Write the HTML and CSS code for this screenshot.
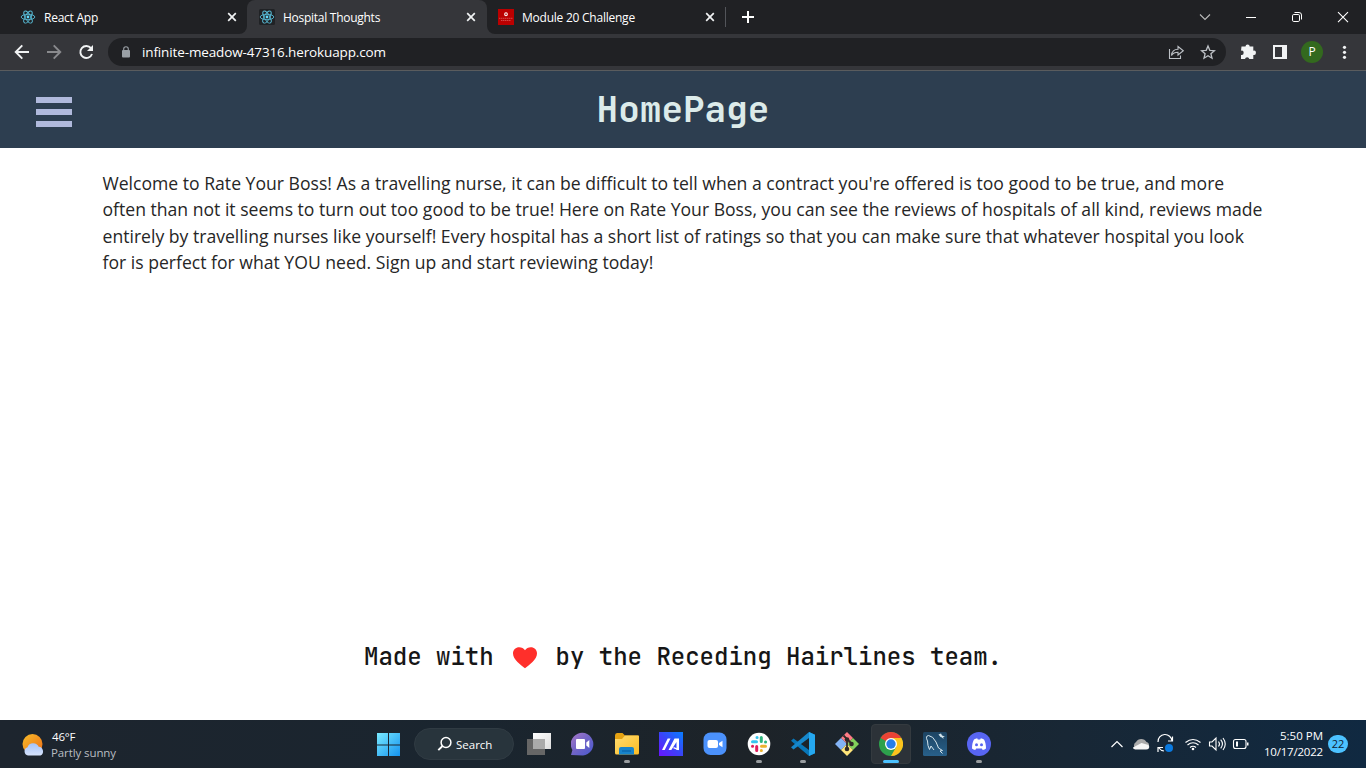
FILE: index.html
```html
<!DOCTYPE html>
<html lang="en">
<head>
<meta charset="utf-8">
<title>Hospital Thoughts</title>
<link rel="stylesheet" href="styles.css">
</head>
<body>
<svg class="defs" width="0" height="0">
  <defs>
    <symbol id="react" viewBox="0 0 16 16">
      <g fill="none" stroke="#58bcd7" stroke-width="0.9">
        <ellipse cx="8" cy="8" rx="6.8" ry="2.7"/>
        <ellipse cx="8" cy="8" rx="6.8" ry="2.7" transform="rotate(60 8 8)"/>
        <ellipse cx="8" cy="8" rx="6.8" ry="2.7" transform="rotate(120 8 8)"/>
      </g>
      <circle cx="8" cy="8" r="1.4" fill="#61dafb"/>
    </symbol>
    <symbol id="x" viewBox="0 0 10 10"><path d="M1.2 1.2l7.6 7.6M8.8 1.2L1.2 8.8" stroke="#f1f3f4" stroke-width="1.7"/></symbol>
    <linearGradient id="win" x1="0" y1="0" x2="1" y2="1"><stop offset="0" stop-color="#79eaff"/><stop offset="1" stop-color="#1492ee"/></linearGradient>
    <linearGradient id="sun" x1="0" y1="0" x2="1" y2="1"><stop offset="0" stop-color="#f8bd29"/><stop offset="1" stop-color="#ed6d18"/></linearGradient>
    <linearGradient id="cloud" x1="0" y1="0" x2="0" y2="1"><stop offset="0" stop-color="#a5c4fa"/><stop offset="1" stop-color="#d5e2fb"/></linearGradient>
    <linearGradient id="chat" x1="0" y1="0" x2="1" y2="1"><stop offset="0" stop-color="#a877c8"/><stop offset=".5" stop-color="#7064c6"/><stop offset="1" stop-color="#4859d0"/></linearGradient>
    <linearGradient id="asus" x1="0" y1="1" x2="1" y2="0"><stop offset="0" stop-color="#6a14ff"/><stop offset=".5" stop-color="#3a44f7"/><stop offset="1" stop-color="#087eff"/></linearGradient>
    <linearGradient id="fold" x1="0" y1="0" x2="1" y2="1"><stop offset="0" stop-color="#ffdc70"/><stop offset="1" stop-color="#fcbc23"/></linearGradient>
    <linearGradient id="sql" x1="0" y1="0" x2="0" y2="1"><stop offset="0" stop-color="#1d4463"/><stop offset="1" stop-color="#28608a"/></linearGradient>
    <linearGradient id="tv" x1="0" y1="0" x2="1" y2="1"><stop offset="0" stop-color="#fff"/><stop offset="1" stop-color="#ddd"/></linearGradient>
  </defs>
</svg>

<div class="tabs">
  <div class="tab">
    <svg width="16" height="16"><use href="#react"/></svg>
    <span class="tab-title t1">React App</span>
    <svg width="10" height="10"><use href="#x"/></svg>
  </div>
  <div class="tab active">
    <svg width="16" height="16"><rect width="16" height="16" rx="1.5" fill="#202225"/><use href="#react"/></svg>
    <span class="tab-title t2">Hospital Thoughts</span>
    <svg width="10" height="10"><use href="#x"/></svg>
  </div>
  <div class="tab last">
    <svg width="16" height="16" viewBox="0 0 16 16"><path fill="#b00" d="M0 0h16v16H0z"/><ellipse cx="8" cy="5.3" rx="1.3" ry="1.5" fill="none" stroke="#fff" stroke-width="1.1"/><path d="M1 9.300h14M3 11.500h10" stroke="#d66" stroke-width=".7" stroke-dasharray="1.500 .5"/></svg>
    <span class="tab-title t3">Module 20 Challenge</span>
    <svg width="10" height="10"><use href="#x"/></svg>
  </div>
  <svg class="plus" width="12" height="12" viewBox="0 0 12 12"><path d="M6 0v12M0 6h12" stroke="#fff" stroke-width="2"/></svg>
  <div class="window-controls">
    <svg width="46" height="28" viewBox="0 0 46 28"><path d="M18 11.500l5 5 5-5" fill="none" stroke="#bbb" stroke-width="1.100"/></svg>
    <svg width="46" height="28" viewBox="0 0 46 28"><path d="M18 14.500h10" stroke="#fff"/></svg>
    <svg width="46" height="28" viewBox="0 0 46 28"><g fill="none" stroke="#fff"><rect x="18.500" y="11.500" width="7" height="7" rx="1.300"/><path d="M20.500 9.500h4.500q2.500 0 2.500 2.500v4.500"/></g></svg>
    <svg width="46" height="28" viewBox="0 0 46 28"><path d="M18 9.200l10 10M28 9.200l-10 10" stroke="#fff" stroke-width="1.100"/></svg>
  </div>
</div>

<div class="toolbar">
  <svg class="nav" width="108" height="36" viewBox="0 0 108 36">
    <g fill="none" stroke-width="1.900">
      <path d="M29 18H16M22.300 11.400L15.700 18l6.600 6.600" stroke="#f1f3f4"/>
      <path d="M47 18h13M53.700 11.400l6.600 6.600-6.600 6.600" stroke="#898a8d"/>
      <path d="M91 14.200A6 6 0 1 0 92 20" stroke="#f1f3f4"/>
    </g>
    <path d="M93 11v6h-6z" fill="#f1f3f4"/>
  </svg>
  <div class="address">
    <svg width="8" height="12" viewBox="0 0 8 12"><rect y="4" width="8" height="7.500" rx="1" fill="#9aa0a6"/><path d="M1.700 5V3a2.300 2.300 0 0 1 4.600 0V5" fill="none" stroke="#9aa0a6" stroke-width="1.100"/></svg>
    <span class="url">infinite-meadow-47316.herokuapp.com</span>
    <svg class="share" width="56" height="28" viewBox="0 0 56 28" fill="none" stroke="#bdc1c6"><path d="M7.500 11v9.500h11V17.500" stroke-width="1.100"/><path d="M9.500 17.500c.4-4.200 3-6.200 6.500-6.200V8.500l5.300 4.200-5.300 4.300v-2.700c-3 0-5 .7-6.500 3.200z" stroke-width="1.100"/><path d="M46 8l1.800 4.300 4.600.4-3.500 3 1.100 4.500-4-2.400-4 2.400 1.100-4.500-3.500-3 4.600-.4z" stroke-width="1.300"/></svg>
  </div>
  <svg width="140" height="36" viewBox="0 0 140 36">
    <path d="M15.500 12.500h4a2.100 2.100 0 1 1 4.200 0h3.600v4.200a2.200 2.200 0 1 1 0 4.300v4h-4a2.200 2.200 0 0 0-4.300 0h-4v-4a2.200 2.200 0 1 0 0-4.300z" fill="#f1f3f4"/>
    <path d="M48 12h12v12H48z" fill="none" stroke="#f1f3f4" stroke-width="2"/><path d="M56 12h4v12h-4z" fill="#f1f3f4"/>
    <circle cx="86" cy="18" r="11" fill="#33691e"/><text x="86" y="22.300" text-anchor="middle" class="avatar">P</text>
    <g fill="#f1f3f4"><circle cx="118.500" cy="13.300" r="1.600"/><circle cx="118.500" cy="18.300" r="1.600"/><circle cx="118.500" cy="23.300" r="1.600"/></g>
  </svg>
</div>

<header class="header">
  <div class="burger"><i></i><i></i><i></i></div>
  <h1 class="title">HomePage</h1>
</header>

<main class="main">
  <p class="intro">Welcome to Rate Your Boss! As a travelling nurse, it can be difficult to tell when a contract you're offered is too good to be true, and more<br>often than not it seems to turn out too good to be true! Here on Rate Your Boss, you can see the reviews of hospitals of all kind, reviews made<br>entirely by travelling nurses like yourself! Every hospital has a short list of ratings so that you can make sure that whatever hospital you look<br>for is perfect for what YOU need. Sign up and start reviewing today!</p>
  <footer class="footer"><span>Made with</span><svg width="24" height="22" viewBox="0 0 24 22"><path d="M12 21.300C8 18 0 12.500 0 6.500 0 2.800 2.800.3 6.200.3 8.700.3 10.700 1.400 12 3.200 13.300 1.400 15.300.3 17.800.3 21.200.3 24 2.800 24 6.500c0 6-8 11.500-12 14.800z" fill="#ff2f2b"/></svg><span>by the Receding Hairlines team.</span></footer>
</main>

<div class="taskbar">
  <div class="weather">
    <svg width="24" height="24" viewBox="0 0 24 24"><circle cx="10.500" cy="11" r="10" fill="url(#sun)"/><path d="M6 22.500a4.300 4.300 0 0 1-.5-8.300 6 6 0 0 1 11.200-.4A4.600 4.600 0 0 1 18.500 22.500z" fill="url(#cloud)"/></svg>
    <div class="weather-text"><div class="temp">46°F</div><div class="sky">Partly sunny</div></div>
  </div>
  <svg class="start" width="24" height="24" viewBox="0 0 24 24"><path d="M1 0h11v11.500H1zM13 0h11v11.500H13zM1 12.500h11V23H1zM13 12.500h11V23H13z" fill="url(#win)"/></svg>
  <div class="search"><svg width="16" height="16" viewBox="0 0 16 16"><circle cx="9" cy="6.500" r="4.900" fill="none" stroke="#fff" stroke-width="1.500"/><path d="M5.500 10L1.300 14.200" stroke="#fff" stroke-width="1.900"/></svg><span>Search</span></div>
  <div class="apps">
    <div class="app"><svg viewBox="0 0 24 24"><path d="M6 1h18v16H6z" fill="url(#tv)"/><path d="M0 7h18v16H0z" fill="#666"/><path d="M6 7h12v10H6z" fill="#aaa"/></svg></div>
    <div class="app"><svg viewBox="0 0 24 24"><path d="M0 23l1.400-5A11.300 11.300 0 1 1 12 23.400z" fill="url(#chat)"/><rect x="5" y="7" width="9" height="10" rx="1" fill="#fff"/><path d="M15.300 10.500L18.300 8v8l-3-2.500z" fill="#fff"/></svg></div>
    <div class="app open"><svg viewBox="0 0 24 24"><path d="M0 3.500Q0 1 2 1h5.500L10 3.500h13q1 0 1 1V8H0z" fill="#e5a212"/><path d="M0 7h7l3-3.500h13q1 0 1 1v16.500q0 1.500-1.500 1.500h-21Q0 22.500 0 21z" fill="url(#fold)"/><path d="M4 22.500v-5.500q0-2 2-2h11q2 0 2 2v5.500z" fill="#1784cb"/><path d="M7 19h9" stroke="#0a65ab" stroke-width="1.300"/></svg></div>
    <div class="app"><svg viewBox="0 0 24 24"><path d="M0 0h24v24H0z" fill="url(#asus)"/><path d="M3 18L8.700 6.500h2.800L5.700 18zM9.500 18l6-11.500H20V18h-2.500V10L12.300 18z" fill="#fff"/><path d="M14.500 15.700l5 2" stroke="#fff" stroke-width="1.300"/></svg></div>
    <div class="app"><svg viewBox="0 0 24 24"><rect x=".5" y=".5" width="23" height="22.500" rx="7" fill="#4b91fb"/><rect x="4.500" y="8" width="10.500" height="8" rx="2" fill="#fff"/><path d="M16 11l3.500-2.300v6.600L16 13z" fill="#fff"/></svg></div>
    <div class="app open"><svg viewBox="0 0 24 24"><circle cx="12" cy="12" r="11.300" fill="#fff"/><g fill="none" stroke-linecap="round" stroke-width="3"><path d="M5.500 9.700h4M10 5.500h.1" stroke="#36c5f0"/><path d="M14.300 5.500v4M18.500 10h.1" stroke="#2eb67d"/><path d="M14.500 14.300h4M14.300 18.500h.1" stroke="#ecb22e"/><path d="M9.700 14.500v4M5.500 14.300h.1" stroke="#e01e5a"/></g></svg></div>
    <div class="app open"><svg viewBox="0 0 24 24"><path d="M18 0l6 2.700v18.600L18 24 0 8.700 2.500 6.500 18 18z" fill="#0877b9"/><path d="M0 15.300L18 0v6L2.500 17.500z" fill="#1687cb"/><path d="M18 0l6 2.700v18.600L18 24z" fill="#25a8f0"/></svg></div>
    <div class="app"><svg viewBox="0 0 24 24"><path d="M12 0l6 6-6 6-6-6z" fill="#ff7b85"/><path d="M6 6l6 6-6 6-6-6z" fill="#83b3f5"/><path d="M18 6l6 6-6 6-6-6z" fill="#82d15b"/><path d="M12 12l6 6-6 6-6-6z" fill="#ffe57a"/><path d="M8.500 3.500L12 7v11M12 7l5 5" fill="none" stroke="#2f2927" stroke-width="1.800"/><g fill="#2f2927"><circle cx="12" cy="7.500" r="2.300"/><circle cx="16.500" cy="12" r="2.300"/><circle cx="12" cy="17" r="2.300"/></g></svg></div>
    <div class="app current"><svg viewBox="0 0 24 24"><circle cx="12" cy="12" r="12" fill="#2da14c"/><path d="M12 12L1.600 6A12 12 0 0 1 22.400 6H12z" fill="#ea4335"/><path d="M12 6h10.400A12 12 0 0 1 12 24l5.200-9z" fill="#fcc31d"/><circle cx="12" cy="12" r="6" fill="#fff"/><circle cx="12" cy="12" r="4.700" fill="#267de9"/></svg></div>
    <div class="app"><svg viewBox="0 0 24 24"><rect width="24" height="24" rx="1.500" fill="url(#sql)"/><path d="M6.500 17.500L5 13.500l-.5-4.500Q2 4 5.500 3.500 10 4 13 10l2.500 6 4 2.500-2.500.5 2.500 2.500M6.500 17.500L8 14l3 4" fill="none" stroke="#d5e5ec" stroke-width="1"/><path d="M15.500 2.500l2 2.500 1.500.5L20.500 7l-.3-2L22 4.500l-3-1-1-2z" fill="#d5e5ec"/></svg></div>
    <div class="app open"><svg viewBox="0 0 24 24"><circle cx="12" cy="12" r="12" fill="#5865f2"/><path d="M5 16.500c0-4 .8-7 2-9 1-.7 2-1 3.200-1.200l.6 1.200h2.400l.6-1.200c1.200.2 2.200.5 3.200 1.200 1.200 2 2 5 2 9-1 .8-2 1.200-3.300 1.500l-.8-1.500H9.100L8.300 18C7 17.700 6 17.300 5 16.500z" fill="#fff"/><circle cx="9.500" cy="12.800" r="1.500" fill="#5865f2"/><circle cx="14.500" cy="12.800" r="1.500" fill="#5865f2"/></svg></div>
  </div>
  <div class="tray">
    <svg width="144" height="24" viewBox="0 0 144 24">
      <path d="M1.500 15l5.500-5.500 5.500 5.500" fill="none" stroke="#fff" stroke-width="1.200"/>
      <path d="M26 17a4 4 0 0 1 0-7 6 6 0 0 1 10.500 0A3.600 3.600 0 0 1 36 17z" fill="#aaa"/><path d="M27 17.500q-4 0-4-2l8.500-4.500q5 1 7.500 2.500 1 4-3 4z" fill="#f5f5f5"/>
      <g fill="none" stroke="#fff" stroke-width="1.200"><path d="M48 10a7 7 0 0 1 14-1M62.500 4.500V9H58M48 20v-4.500h5M49 16a7 7 0 0 0 5 3"/></g><circle cx="59" cy="16" r="4" fill="#0a7ae0"/>
      <g fill="none" stroke="#fff" stroke-width="1.200"><path d="M75.500 10.500q7.500-6 15 0M77.500 13q5.500-4.500 11 0M80 15.500q3-2.500 6 0"/></g><circle cx="83" cy="17" r="1.300" fill="#fff"/>
      <g fill="none" stroke="#fff" stroke-width="1.100"><path d="M99.500 10h2.500l4-4v12l-4-4h-2.500zM108.500 9.500q2 2.500 0 5M110.700 7.700q3.500 4.300 0 8.600M113 6q4.500 6 0 12"/><rect x="123.500" y="7.500" width="12.500" height="9" rx="2"/></g><path d="M126 9.500h2v5h-2zM137 10.500h1.500v3H137z" fill="#fff"/>
    </svg>
  </div>
  <div class="clock"><div class="time">5:50 PM</div><div class="date">10/17/2022</div></div>
  <span class="badge">22</span>
</div>
</body>
</html>
```
FILE: styles.css
```css
* { box-sizing: border-box; }
body { margin: 0; width: 1366px; height: 768px; overflow: hidden; display: flex; flex-direction: column; background: #fff; font-family: "Open Sans", sans-serif; }
svg { display: block; flex: none; }
.defs { position: absolute; }
.tabs { height: 34px; flex: none; display: flex; align-items: center; background: linear-gradient(90deg, transparent 239px, #35363a 239px, #35363a 495px, transparent 495px), #202124; color: #fff; }
.tab { width: 247px; height: 34px; padding: 0 10px 0 20px; display: flex; align-items: center; gap: 8px; font-size: 12px; background: #202124; border-radius: 0 0 8px 0; }
.tab.active { width: 240px; padding-left: 12px; padding-right: 11px; background: linear-gradient(90deg, #202124 8px, transparent 8px, transparent 232px, #202124 232px) top / 100% 8px no-repeat; border-radius: 0; position: relative; isolation: isolate; }
.tab.active::before { content: ""; position: absolute; inset: 0; z-index: -1; background: #35363a; border-radius: 8px 8px 0 0; }
.tab.last { width: 239px; padding-left: 11px; padding-right: 11px; border-radius: 0 0 0 8px; background: linear-gradient(#53555a, #53555a) right 0 top 7px / 1px 20px no-repeat, #202124; }
.tab-title { flex: 1; white-space: nowrap; }
.t1 { letter-spacing: -.25px; }
.t2 { letter-spacing: -.27px; }
.t3 { letter-spacing: -.24px; }
.plus { margin-left: 16px; }
.window-controls { margin-left: auto; display: flex; width: 184px; }
.toolbar { height: 37px; flex: none; display: flex; background: #35363a; border-bottom: 1px solid #5a5c5e; }
.address { width: 1118px; height: 28px; margin-top: 4px; border-radius: 14px; background: #202124; display: flex; align-items: center; padding: 0 8px 0 14px; color: #fff; font-size: 13.5px; }
.url { margin-left: 12px; white-space: nowrap; letter-spacing: -.13px; }
.share { margin-left: auto; }
.avatar { font: 12px "Open Sans", sans-serif; fill: #fff; }
.header { height: 77px; flex: none; background: #2d3e50; display: grid; grid-template-columns: 1fr auto 1fr; align-items: center; }
.burger { width: 36px; margin-left: 36px; margin-top: 5px; display: grid; gap: 6px; }
.burger i { height: 6px; background: #b0b9dc; }
.title { margin: 0 0 2px; color: #dcebea; font: bold 36px/48px "JetBrains Mono", "DejaVu Sans Mono", monospace; }
.main { flex: 1; display: flex; flex-direction: column; justify-content: space-between; padding: 22px 0 46px 102.5px; }
.intro { margin: 0; font-size: 17.6px; line-height: 26.4px; font-weight: 400; color: #262626; white-space: nowrap; }
.footer { display: flex; align-items: center; height: 34px; margin-left: 261.5px; color: #161616; font: 500 24px/34px "JetBrains Mono", "DejaVu Sans Mono", monospace; white-space: nowrap; }
.footer svg { margin: 2px 19px 0 19px; }
.taskbar { height: 48px; flex: none; display: flex; align-items: center; background: linear-gradient(90deg, #1d252e 0%, #1a252f 35%, #1d2328 55%, #182735 78%, #102941 100%); color: #fff; font-size: 11.5px; }
.weather { width: 376px; padding-left: 22px; display: flex; align-items: center; gap: 5px; }
.weather svg { margin-top: 2px; }
.weather-text { line-height: 16px; padding-top: 1px; }
.temp { letter-spacing: -.2px; padding-left: 1px; }
.sky { color: #b9bdc1; letter-spacing: -.1px; }
.start { margin-top: 1px; }
.search { width: 100px; height: 32px; margin-left: 14px; border-radius: 16px; background: #28343c; border: 1px solid #303b43; display: flex; align-items: center; padding-left: 22px; gap: 3px; }
.apps { display: flex; width: 484px; margin-left: 3px; }
.app { width: 44px; height: 48px; padding: 12px 10px; position: relative; }
.app svg { width: 24px; height: 24px; }
.app.open::after, .app.current::after { content: ""; position: absolute; width: 6px; height: 3px; left: 19px; top: 40px; border-radius: 2px; background: #999da0; }
.app.current::before { content: ""; position: absolute; inset: 4px 2px; border-radius: 4px; background: #2c3238; border: 1px solid #343a3f; }
.app.current svg { position: relative; }
.app.current::after { width: 16px; left: 14px; background: #4cc2ff; }
.tray { margin-left: 109px; }
.clock { width: 69px; text-align: right; line-height: 16px; white-space: nowrap; }
.date { letter-spacing: -.2px; }
.badge { width: 20px; height: 18px; margin-left: 5px; border-radius: 9px; background: #4cc2ff; color: #102030; font-size: 11px; line-height: 18px; text-align: center; }
```
